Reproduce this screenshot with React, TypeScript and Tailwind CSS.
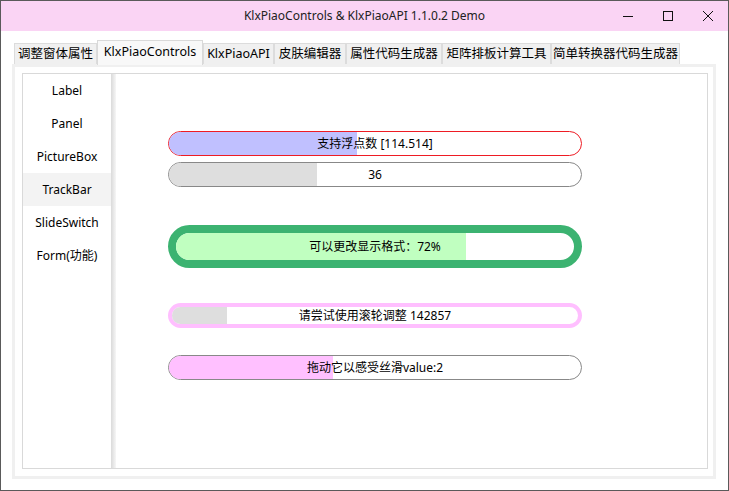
import React from "react";

const font = { fontFamily: '"Noto Sans", "Noto Sans CJK SC", sans-serif' };

function Bar({
  top,
  height,
  border,
  borderClass,
  fill,
  fillWidth,
  text,
}: {
  top: string;
  height: string;
  border: string;
  borderClass: string;
  fill: string;
  fillWidth: number;
  text: string;
}) {
  return (
    <div className={`relative w-[414px] ${height} ${top} rounded-full ${borderClass} ${border} bg-white overflow-hidden`}>
      <div className={`absolute left-0 top-0 bottom-0 ${fill}`} style={{ width: fillWidth }} />
      <div className="absolute inset-0 flex items-center justify-center text-[12px] text-black leading-none">
        {text}
      </div>
    </div>
  );
}

export default function App() {
  const tabs = [
    { t: "调整窗体属性", w: "w-[83px]" },
    { t: "KlxPiaoControls", w: "w-[106px]", sel: true },
    { t: "KlxPiaoAPI", w: "w-[71px]" },
    { t: "皮肤编辑器", w: "w-[72px]" },
    { t: "属性代码生成器", w: "w-[96px]" },
    { t: "矩阵排板计算工具", w: "w-[109px]" },
    { t: "简单转换器代码生成器", w: "w-[129px]" },
  ];
  const items = ["Label", "Panel", "PictureBox", "TrackBar", "SlideSwitch", "Form(功能)"];
  return (
    <div className="w-[729px] h-[491px] border border-[#5a5a5a] bg-white flex flex-col text-black" style={font}>
      <div className="relative h-[30px] bg-[#fad4f4] flex items-center justify-center text-[12px] text-[#222]">
        KlxPiaoControls &amp; KlxPiaoAPI 1.1.0.2 Demo
        <div className="absolute right-0 top-0 h-[30px] flex items-center">
          <div className="w-[40px] h-[30px] flex items-center justify-center">
            <svg width="12" height="12" viewBox="0 0 12 12"><path d="M1 6.5h10" stroke="#111" strokeWidth="1" /></svg>
          </div>
          <div className="w-[40px] h-[30px] flex items-center justify-center">
            <svg width="12" height="12" viewBox="0 0 12 12"><rect x="1.5" y="1.5" width="9" height="9" fill="none" stroke="#111" strokeWidth="1" /></svg>
          </div>
          <div className="w-[40px] h-[30px] flex items-center justify-center">
            <svg width="12" height="12" viewBox="0 0 12 12"><path d="M1 1L11 11M11 1L1 11" stroke="#111" strokeWidth="1" /></svg>
          </div>
        </div>
      </div>
      <div className="h-[9px]" />
      <div className="flex items-end h-[24px] pl-[13px]">
        {tabs.map((tab) =>
          tab.sel ? (
            <div
              key={tab.t}
              className={`${tab.w} h-[25px] -mb-px relative z-10 bg-[#f8f8f8] border border-b-0 border-[#d9d9d9] flex items-center justify-center text-[12.5px] pb-[2px]`}
            >
              {tab.t}
            </div>
          ) : (
            <div
              key={tab.t}
              className={`${tab.w} h-[21px] bg-[#f0f0f0] border border-b-0 border-[#dcdcdc] flex items-center justify-center text-[12.5px]`}
            >
              {tab.t}
            </div>
          )
        )}
      </div>
      <div className="ml-[11px] w-[704px] h-[415px] border-[3px] border-[#f0f0f0] bg-white pt-[6px] pl-[7px]">
        <div className="w-[686px] h-[396px] border border-[#d9d9d9] flex">
          <div className="w-[88px] flex flex-col">
            {items.map((it) => (
              <div
                key={it}
                className={`h-[33px] flex items-center justify-center text-[12px] ${it === "TrackBar" ? "bg-[#f3f3f3]" : ""}`}
              >
                {it}
              </div>
            ))}
          </div>
          <div className="w-[5px] bg-gradient-to-r from-[#dadada] to-[#f6f6f6]" />
          <div className="flex-1 flex flex-col pl-[52px] pt-[57px]">
            <Bar top="" height="h-[25px]" borderClass="border" border="border-[#ee1c24]" fill="bg-[#c0c0ff]" fillWidth={188} text="支持浮点数 [114.514]" />
            <Bar top="mt-[6px]" height="h-[25px]" borderClass="border" border="border-[#888888]" fill="bg-[#dedede]" fillWidth={148} text="36" />
            <Bar top="mt-[38px]" height="h-[43px]" borderClass="border-[8px]" border="border-[#3cb371]" fill="bg-[#c0ffc0]" fillWidth={290} text="可以更改显示格式：72%" />
            <Bar top="mt-[35px]" height="h-[25px]" borderClass="border-[4px]" border="border-[#ffbfff]" fill="bg-[#dedede]" fillWidth={55} text="请尝试使用滚轮调整 142857" />
            <Bar top="mt-[27px]" height="h-[25px]" borderClass="border" border="border-[#888888]" fill="bg-[#ffc0ff]" fillWidth={164} text="拖动它以感受丝滑value:2" />
          </div>
        </div>
      </div>
    </div>
  );
}
